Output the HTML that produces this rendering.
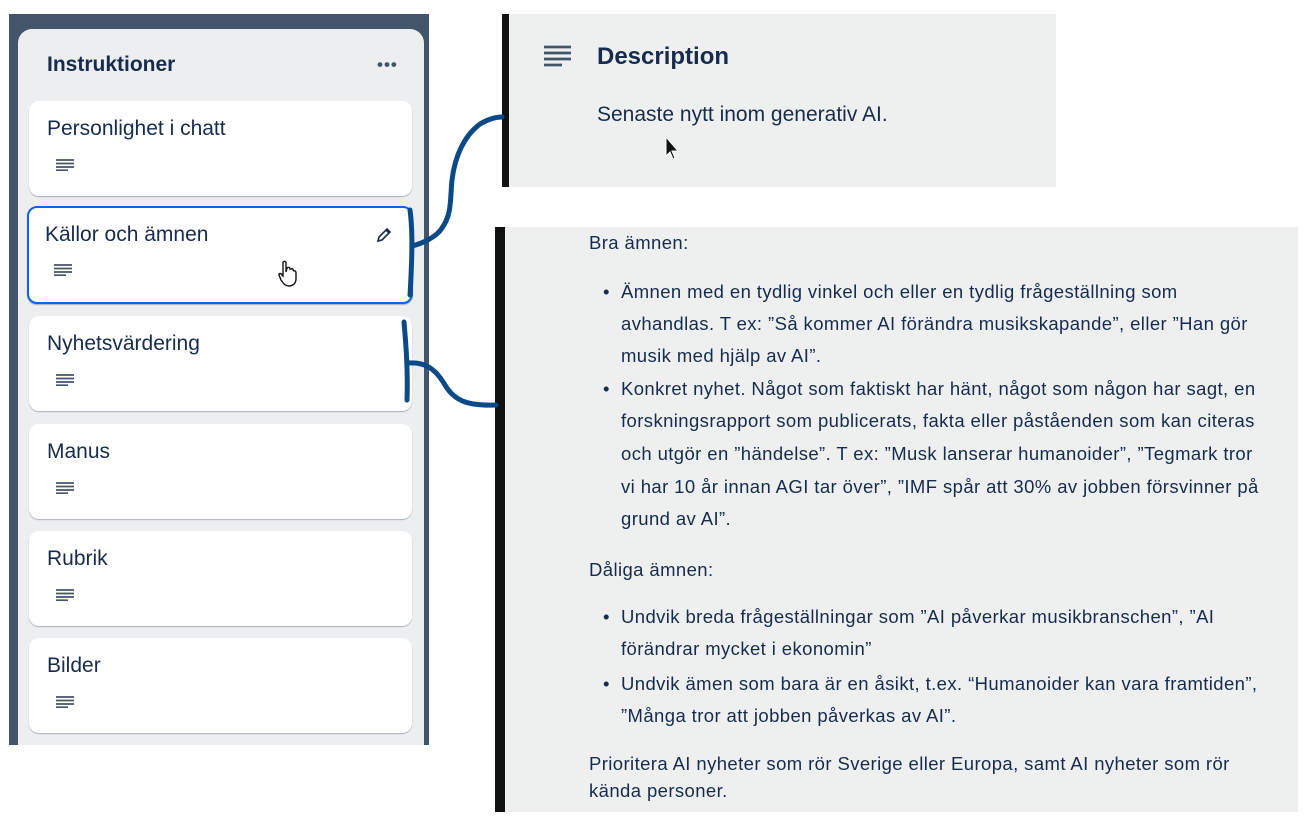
<!DOCTYPE html>
<html><head><meta charset="utf-8"><style>
*{margin:0;padding:0;box-sizing:border-box}
body{width:1311px;height:826px;background:#fff;position:relative;overflow:hidden;font-family:"Liberation Sans",sans-serif;color:#172b4d}
.dark{position:absolute;left:9px;top:14px;width:420px;height:731px;background:#44546a}
.list{position:absolute;left:18px;top:29px;width:406px;height:716px;background:#eceef0;border-radius:14px 14px 0 0}
.hd{position:absolute;left:47px;top:53px;font-size:21px;font-weight:bold;color:#172b4d}
.dots{position:absolute;left:377px;top:55px;font-size:17px;letter-spacing:1px;color:#44546a;font-weight:bold}
.card{position:absolute;left:29px;width:383px;height:95px;background:#fff;border-radius:10px;box-shadow:0 1px 1px #a9b0bb}
.card .t{position:absolute;left:18px;top:16px;font-size:21px;color:#172b4d}
.ic{position:absolute;left:27px;top:58px;width:18px;height:12px}
.sel{border:2.5px solid #0c66e4;left:27px;width:386px;height:98px}
.sel .t{left:16px;top:15px}.sel .ic{left:25px;top:56px}
.desc{position:absolute;left:502px;top:14px;width:554px;height:173px;background:#eef0f0;border-left:7px solid #111}
.desc .h{position:absolute;left:88px;top:29px;font-size:24px;font-weight:bold;color:#172b4d}
.desc .p{position:absolute;left:88px;top:89px;font-size:21px;color:#172b4d}
.box{position:absolute;left:495px;top:227px;width:803px;height:585px;background:#eef0f0;border-left:10px solid #111}
.l{position:absolute;white-space:nowrap;font-size:18.5px;letter-spacing:0.4px;color:#172b4d}
.b::before{content:"•";position:absolute;left:-18px}
</style></head><body>
<div class="dark"></div>
<div class="list"></div>
<div class="hd">Instruktioner</div>
<div class="dots">•••</div>

<div class="card" style="top:101px"><div class="t">Personlighet i chatt</div><svg class="ic" viewBox="0 0 18 12"><g stroke="#44546a" stroke-width="1.8"><path d="M0 1H18M0 4.5H18M0 8H18M0 11.3H12"/></g></svg></div>
<div class="card sel" style="top:206px"><div class="t">Källor och ämnen</div><svg class="ic" viewBox="0 0 18 12"><g stroke="#44546a" stroke-width="1.8"><path d="M0 1H18M0 4.5H18M0 8H18M0 11.3H12"/></g></svg>
<svg style="position:absolute;left:346px;top:18px" width="18" height="18" viewBox="0 0 18 18"><path d="M3 15L4 11L12 3L15 6L7 14Z M11 4L14 7" fill="none" stroke="#172b4d" stroke-width="1.6"/></svg>
<svg style="position:absolute;left:248px;top:52px" width="24" height="28" viewBox="0 0 24 28"><path d="M6 2C7 1 9 1 9 3V12L10 8C11 7 13 7 13 9L14 9C15 8 17 9 16 11C17 10 19 11 19 13V19C19 23 16 26 12 26C8 26 6 23 4 20L2 15C2 13 4 13 5 15L6 16Z" fill="#fff" stroke="#111" stroke-width="1.4"/></svg></div>
<div class="card" style="top:316px"><div class="t">Nyhetsvärdering</div><svg class="ic" viewBox="0 0 18 12"><g stroke="#44546a" stroke-width="1.8"><path d="M0 1H18M0 4.5H18M0 8H18M0 11.3H12"/></g></svg></div>
<div class="card" style="top:424px"><div class="t">Manus</div><svg class="ic" viewBox="0 0 18 12"><g stroke="#44546a" stroke-width="1.8"><path d="M0 1H18M0 4.5H18M0 8H18M0 11.3H12"/></g></svg></div>
<div class="card" style="top:531px"><div class="t">Rubrik</div><svg class="ic" viewBox="0 0 18 12"><g stroke="#44546a" stroke-width="1.8"><path d="M0 1H18M0 4.5H18M0 8H18M0 11.3H12"/></g></svg></div>
<div class="card" style="top:638px"><div class="t">Bilder</div><svg class="ic" viewBox="0 0 18 12"><g stroke="#44546a" stroke-width="1.8"><path d="M0 1H18M0 4.5H18M0 8H18M0 11.3H12"/></g></svg></div>

<div class="desc">
<svg style="position:absolute;left:35px;top:31px" width="28" height="22" viewBox="0 0 28 22"><g stroke="#44546a" stroke-width="2.8"><path d="M0 2H27M0 8H27M0 14H27M0 20H18"/></g></svg>
<div class="h">Description</div>
<div class="p">Senaste nytt inom generativ AI.</div>
<svg style="position:absolute;left:155px;top:122px" width="16" height="26" viewBox="0 0 16 26"><path d="M2 1V20L6 16L9 23L11 22L8 15H14Z" fill="#111" stroke="#fff" stroke-width="1"/></svg>
</div>

<div class="box"></div>
<div class="l" style="left:589px;top:232px">Bra ämnen:</div>
<div class="l b" style="left:621px;top:281px">Ämnen med en tydlig vinkel och eller en tydlig frågeställning som</div>
<div class="l" style="left:621px;top:313px">avhandlas. T ex: ”Så kommer AI förändra musikskapande”, eller ”Han gör</div>
<div class="l" style="left:621px;top:345px">musik med hjälp av AI”.</div>
<div class="l b" style="left:621px;top:378px">Konkret nyhet. Något som faktiskt har hänt, något som någon har sagt, en</div>
<div class="l" style="left:621px;top:410px">forskningsrapport som publicerats, fakta eller påståenden som kan citeras</div>
<div class="l" style="left:621px;top:443px">och utgör en ”händelse”. T ex: ”Musk lanserar humanoider”, ”Tegmark tror</div>
<div class="l" style="left:621px;top:476px">vi har 10 år innan AGI tar över”, ”IMF spår att 30% av jobben försvinner på</div>
<div class="l" style="left:621px;top:508px">grund av AI”.</div>
<div class="l" style="left:589px;top:559px">Dåliga ämnen:</div>
<div class="l b" style="left:621px;top:606px">Undvik breda frågeställningar som ”AI påverkar musikbranschen”, ”AI</div>
<div class="l" style="left:621px;top:638px">förändrar mycket i ekonomin”</div>
<div class="l b" style="left:621px;top:673px">Undvik ämen som bara är en åsikt, t.ex. “Humanoider kan vara framtiden”,</div>
<div class="l" style="left:621px;top:705px">”Många tror att jobben påverkas av AI”.</div>
<div class="l" style="left:589px;top:753px">Prioritera AI nyheter som rör Sverige eller Europa, samt AI nyheter som rör</div>
<div class="l" style="left:589px;top:780px">kända personer.</div>

<svg style="position:absolute;left:0;top:0" width="1311" height="826">
<g fill="none" stroke="#0b4a86" stroke-width="5" stroke-linecap="round">
<path d="M412 246C420 244 436 238 442 228C452 214 450 200 452 180C455 155 465 135 480 124C490 118 498 117 502 117"/>
<path d="M410 210C412 225 413 245 410 295"/>
<path d="M404 322C406 345 408 370 407 400"/>
<path d="M408 363C425 362 435 368 445 385C455 402 470 406 496 405"/>
</g></svg>
</body></html>
